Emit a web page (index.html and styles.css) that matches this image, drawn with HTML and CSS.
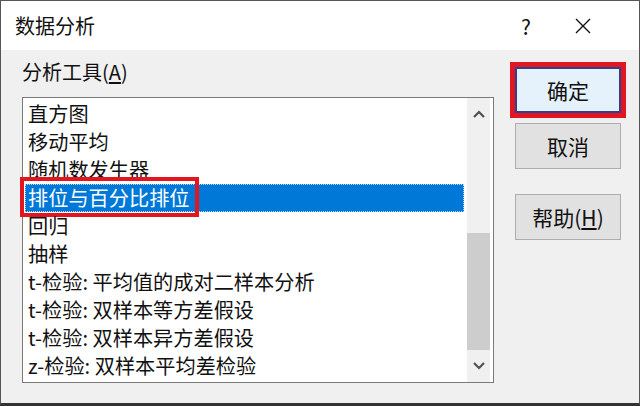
FILE: index.html
```html
<!DOCTYPE html>
<html lang="zh-CN">
<head>
    <meta charset="UTF-8">
    <title>数据分析</title>
    <link rel="stylesheet" href="styles.css">
</head>
<body>
    <div class="dialog">
        <div class="titlebar">
            <span class="title">数据分析</span>
            <span class="help-btn">?</span>
            <span class="close-btn">
                <svg width="16" height="16" viewBox="0 0 16 16"><path d="M1 1 L15 15 M15 1 L1 15" stroke="#111" stroke-width="1.4" fill="none"/></svg>
            </span>
        </div>

        <div class="main">
            <div class="tools">
                <div class="tools-label">分析工具(<u>A</u>)</div>
                <div class="listbox">
                    <ul class="items">
                        <li>直方图</li>
                        <li>移动平均</li>
                        <li>随机数发生器</li>
                        <li class="selected">排位与百分比排位<span class="mark"></span></li>
                        <li>回归</li>
                        <li>抽样</li>
                        <li>t-检验: 平均值的成对二样本分析</li>
                        <li>t-检验: 双样本等方差假设</li>
                        <li>t-检验: 双样本异方差假设</li>
                        <li>z-检验: 双样本平均差检验</li>
                    </ul>
                    <div class="scrollbar">
                        <div class="arrow">
                            <svg width="12" height="8" viewBox="0 0 12 8"><path d="M1 7 L6 2 L11 7" stroke="#505050" stroke-width="2.2" fill="none"/></svg>
                        </div>
                        <div class="track"><div class="thumb"></div></div>
                        <div class="arrow">
                            <svg width="12" height="8" viewBox="0 0 12 8"><path d="M1 1 L6 6 L11 1" stroke="#505050" stroke-width="2.2" fill="none"/></svg>
                        </div>
                    </div>
                </div>
            </div>

            <div class="actions">
                <button class="btn default">确定</button>
                <button class="btn">取消</button>
                <button class="btn help">帮助(<u>H</u>)</button>
            </div>
        </div>
    </div>
</body>
</html>
```

FILE: styles.css
```css
* { margin: 0; padding: 0; box-sizing: border-box; }

body { font-family: "Noto Sans CJK SC", "Noto Sans", sans-serif; color: #111; background: #fff; }

.dialog { width: 640px; height: 406px; background: #f0f0f0; border: 1px solid #555; border-bottom: 3px solid #333; }

.titlebar { height: 49px; background: #fff; display: flex; align-items: center; }

.title { font-size: 20px; padding-left: 14px; }

.help-btn { margin-left: auto; font-size: 21px; width: 20px; text-align: center; margin-right: 39px; }

.close-btn { width: 16px; height: 16px; margin-right: 48px; display: flex; }

.main { display: flex; padding-top: 9px; }

.tools { padding-left: 21px; }

.tools-label { font-size: 20px; line-height: 26px; }

.tools-label u, .btn u { text-underline-offset: 2px; }

.listbox { margin-top: 12px; width: 472px; height: 286px; border: 1px solid #7a7a7a; background: #fff; display: flex; }

.items { list-style: none; width: 444px; padding: 2px 3px 0 2px; }

.items li { height: 28px; line-height: 28px; font-size: 20.2px; padding-left: 3px; white-space: nowrap; position: relative; }

.items li.selected { background: #0078d7; color: #fff; outline: 1px dotted #b8d4ef; outline-offset: -1px; }

.mark { position: absolute; left: -5px; top: -7px; width: 179px; height: 40px; border: 4px solid #e2161f; }

.scrollbar { width: 23px; background: #f0f0f0; display: flex; flex-direction: column; }

.arrow { height: 32px; display: flex; align-items: center; justify-content: center; }

.track { flex: 1; display: flex; flex-direction: column; justify-content: flex-end; }

.thumb { height: 117px; background: #cdcdcd; }

.actions { margin-left: 21px; padding-top: 8px; display: flex; flex-direction: column; gap: 10px; }

.btn { width: 106px; height: 46px; font-family: inherit; font-size: 21px; color: #111; background: #e1e1e1; border: 1px solid #adadad; }

.btn.default { background: #e5f1fb; border: 2px solid #2f3f94; outline: 5px solid #e2161f; }

.btn.help { margin-top: 15px; }
```
